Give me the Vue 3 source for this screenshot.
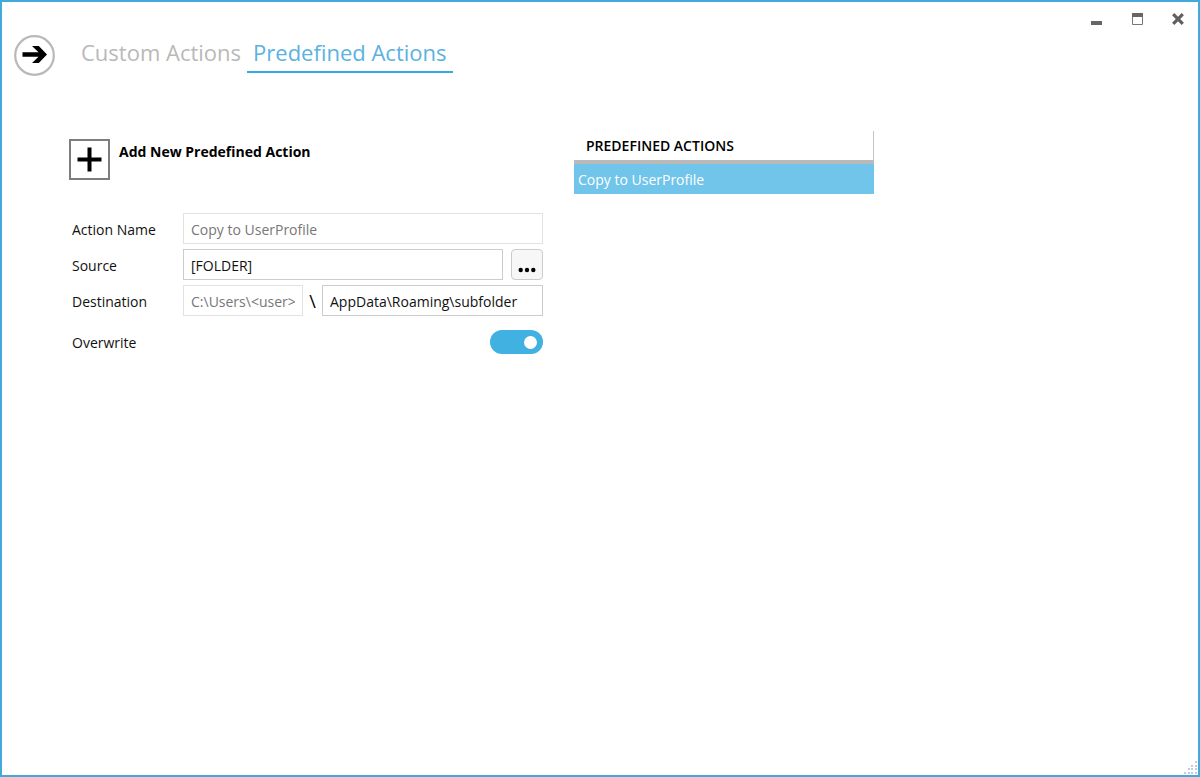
<script setup>
import { ref } from 'vue'

const tabs = ['Custom Actions', 'Predefined Actions']
const activeTab = ref('Predefined Actions')
const actions = ref(['Copy to UserProfile'])
const selected = ref('Copy to UserProfile')
const source = ref('[FOLDER]')
const root = ref('C:\\Users\\<user>')
const destination = ref('AppData\\Roaming\\subfolder')
const overwrite = ref(true)
</script>

<template>
  <div class="window">
    <header class="header">
      <button class="next" type="button" aria-label="Next">
        <svg width="41" height="41" viewBox="0 0 41 41">
          <circle cx="20.5" cy="20.5" r="19.3" fill="#fff" stroke="#b9b9b9" stroke-width="2.2" />
          <path d="M8.5 17.3H24.5L18 11H24.8L33 19.5L24.8 28H18L24.5 21.7H8.5Z" fill="#000" />
        </svg>
      </button>
      <nav class="tabs">
        <button
          v-for="tab in tabs"
          :key="tab"
          type="button"
          class="tab"
          :class="{ active: tab === activeTab }"
          @click="activeTab = tab"
        >{{ tab }}</button>
      </nav>
      <div class="controls">
        <button type="button" aria-label="Minimize">
          <svg width="12" height="12" viewBox="0 0 12 12"><path d="M1 8H12V12H1Z" fill="#666" /></svg>
        </button>
        <button type="button" aria-label="Maximize">
          <svg width="12" height="12" viewBox="0 0 12 12">
            <path d="M1.5 0.5H11.5V11.5H1.5Z" fill="#fff" stroke="#777" />
            <path d="M1 0H12V4H1Z" fill="#666" />
          </svg>
        </button>
        <button type="button" aria-label="Close">
          <svg width="12" height="12" viewBox="0 0 12 12"><path d="M1.2 1.2L10.8 10.8M10.8 1.2L1.2 10.8" stroke="#606060" stroke-width="3.2" /></svg>
        </button>
      </div>
    </header>

    <main class="main">
      <form class="form" @submit.prevent>
        <div class="add">
          <button class="add-button" type="button" aria-labelledby="add-title">
            <svg width="41" height="41" viewBox="0 0 41 41">
              <path d="M1 1H40V40H1Z" fill="#fff" stroke="#7d7d7d" stroke-width="2" />
              <path d="M8.5 20.5H32.5M20.5 8.5V32.5" stroke="#000" stroke-width="4" />
            </svg>
          </button>
          <h1 id="add-title">Add New Predefined Action</h1>
        </div>

        <div class="row">
          <label for="name">Action Name</label>
          <input id="name" class="text" type="text" :value="selected" disabled>
        </div>
        <div class="row">
          <label for="source">Source</label>
          <div class="fields source">
            <input id="source" v-model="source" class="text" type="text">
            <button class="browse" type="button" aria-label="Browse">
              <svg width="18" height="6" viewBox="0 0 18 6">
                <circle cx="2.7" cy="3" r="2.2" /><circle cx="9" cy="3" r="2.2" /><circle cx="15.3" cy="3" r="2.2" />
              </svg>
            </button>
          </div>
        </div>
        <div class="row">
          <label for="destination">Destination</label>
          <div class="fields destination">
            <input v-model="root" class="text" type="text" aria-label="Destination root" disabled>
            <span class="slash">\</span>
            <input id="destination" v-model="destination" class="text" type="text">
          </div>
        </div>
        <div class="row overwrite">
          <label for="overwrite">Overwrite</label>
          <input id="overwrite" v-model="overwrite" class="toggle" type="checkbox">
        </div>
      </form>

      <table class="list">
        <thead>
          <tr><th scope="col">PREDEFINED ACTIONS</th></tr>
        </thead>
        <tbody>
          <tr v-for="action in actions" :key="action" :class="{ selected: action === selected }" @click="selected = action">
            <td>{{ action }}</td>
          </tr>
        </tbody>
      </table>
    </main>

    <svg class="grip" width="13" height="13" viewBox="0 0 13 13" fill="#c3cbe2">
      <path d="M11 0h2v2h-2zM7 4h2v2h-2zM11 4h2v2h-2zM4 7h2v2h-2zM7 7h2v2h-2zM11 7h2v2h-2zM0 11h2v2h-2zM4 11h2v2h-2zM7 11h2v2h-2zM11 11h2v2h-2z" />
    </svg>
  </div>
</template>

<style>
body {
  margin: 0;
  background: #fff;
}
</style>

<style scoped>
* {
  box-sizing: border-box;
}
.window {
  position: relative;
  display: flex;
  flex-direction: column;
  min-height: 100vh;
  border: 2px solid #41a9dc;
  background: #fff;
  color: #111;
  font-family: "Segoe UI", "Open Sans", "Noto Sans", sans-serif;
  font-size: 14px;
  line-height: 20px;
}
button {
  padding: 0;
  border: 0;
  background: none;
  color: inherit;
  font: inherit;
}
svg {
  display: block;
}
.header {
  display: flex;
  align-items: flex-start;
  height: 129px;
}
.next {
  margin: 33px 20px 0 12px;
}
.tabs {
  display: flex;
  flex: 1;
  padding-top: 33px;
}
.tab {
  height: 38px;
  padding: 0 6px 2px;
  border-bottom: 2px solid transparent;
  color: #b9b9b9;
  font-size: 22px;
  font-weight: 400;
  line-height: 34px;
  white-space: nowrap;
}
.tab.active {
  border-color: #36a9e0;
  color: #5bb2e0;
}
.controls {
  display: flex;
}
.controls button {
  display: flex;
  align-items: center;
  justify-content: center;
  width: 41px;
  height: 34px;
}
.main {
  display: grid;
  grid-template-columns: 474fr 300fr 293fr;
  gap: 31px;
  align-items: start;
  padding-left: 67px;
}
.form {
  display: flex;
  flex-direction: column;
  gap: 5px;
  padding-top: 8px;
}
.add {
  display: flex;
  gap: 9px;
  margin-bottom: 28px;
}
h1 {
  margin: 3px 0 0;
  color: #000;
  font-size: 14px;
  font-weight: 700;
  line-height: 20px;
}
.row {
  display: grid;
  grid-template-columns: 111px 1fr;
  align-items: center;
  padding-left: 3px;
}
label {
  padding-top: 2px;
}
.text {
  width: 100%;
  min-width: 0;
  height: 31px;
  padding: 2px 7px 0;
  border: 1px solid #ccc;
  border-radius: 0;
  background: #fff;
  color: #111;
  font: inherit;
}
.text:disabled {
  border-color: #e2e2e2;
  color: #777;
}
.fields {
  display: grid;
}
.source {
  grid-template-columns: 1fr 32px;
  gap: 8px;
}
.destination {
  grid-template-columns: 120fr 19px 221fr;
}
.slash {
  padding-top: 2px;
  color: #000;
  font-size: 18px;
  line-height: 29px;
  text-align: center;
}
.browse {
  display: flex;
  align-items: flex-end;
  justify-content: center;
  height: 31px;
  padding-bottom: 6px;
  border: 1px solid #ccc;
  border-radius: 4px;
  background: #f7f7f7;
}
.overwrite {
  margin-top: 9px;
}
.toggle {
  display: flex;
  align-items: center;
  justify-content: flex-end;
  justify-self: end;
  width: 53px;
  height: 24px;
  margin: 0;
  padding: 0 6px;
  border-radius: 12px;
  background: #41b1e1;
  appearance: none;
}
.toggle::before {
  width: 13px;
  height: 13px;
  border-radius: 50%;
  background: #fff;
  content: "";
}
.toggle:not(:checked) {
  justify-content: flex-start;
  background: #b9b9b9;
}
.list {
  width: 100%;
  border-collapse: separate;
  border-spacing: 0;
}
th {
  height: 33px;
  padding: 0 12px;
  border-right: 1px solid #c4c4c4;
  border-bottom: 4px solid #b9b9b9;
  color: #000;
  font-weight: 600;
  text-align: left;
}
td {
  height: 30px;
  padding: 2px 4px 0;
}
.selected td {
  background: #71c4ea;
  color: #fff;
}
.grip {
  position: absolute;
  right: 1px;
  bottom: 1px;
}
</style>
